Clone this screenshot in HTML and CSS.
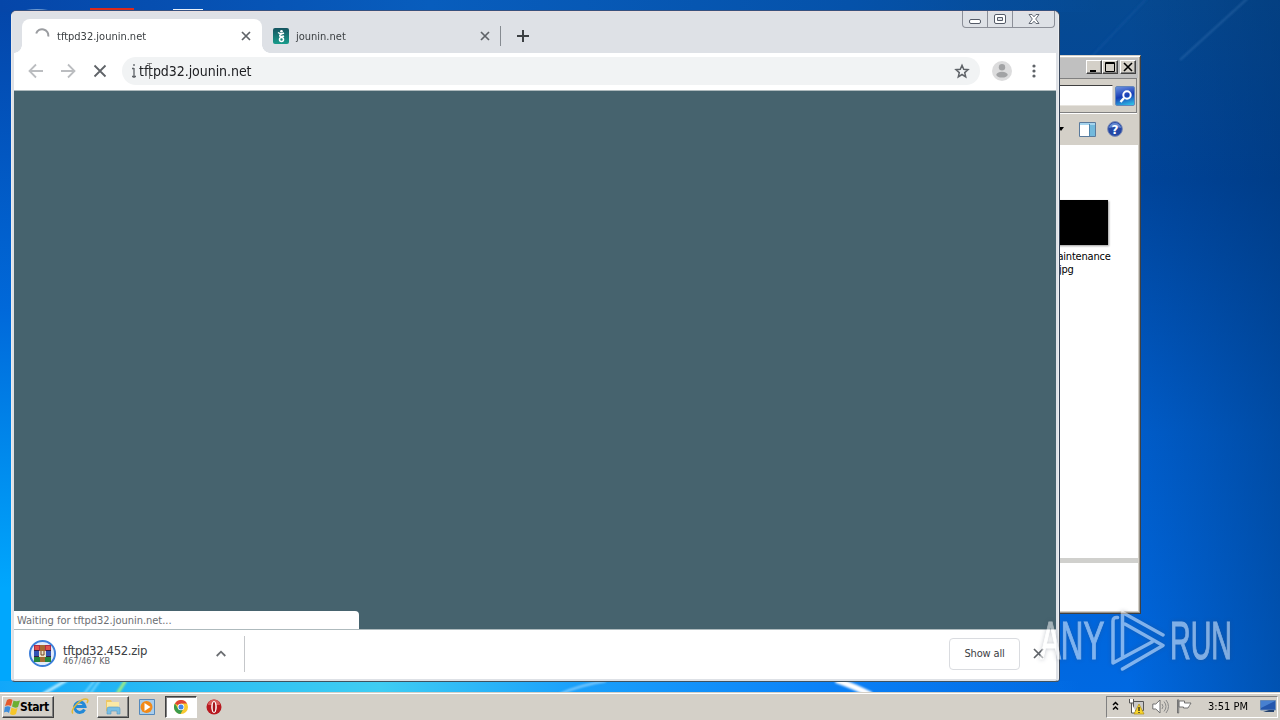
FILE: index.html
```
<!DOCTYPE html>
<html lang="en">
<head>
    <meta charset="UTF-8">
    <meta name="viewport" content="width=device-width, initial-scale=1.0">
    <title>tftpd32.jounin.net</title>
    <link rel="stylesheet" href="styles.css">
</head>
<body>
    <div class="desktop">
        <!-- wallpaper light streaks and desktop icons peeking out -->
        <svg class="wallpaper" width="1280" height="692" viewBox="0 0 1280 692">
            <defs><filter id="soft"><feGaussianBlur stdDeviation="1"/></filter></defs>
            <path d="M26 10q11-2 22 0v3H26z" fill="#6f9bd0"/>
            <path d="M90 8h44v4H90z" fill="#dc2a1c"/>
            <path d="M173 9h30v4h-30z" fill="#e9f1fa"/>
            <g fill="none" filter="url(#soft)">
                <path d="M1248-2 1180 60" stroke="#5d94cc" stroke-width="1.5" opacity=".4"/>
                <path d="M1150-5 1060 90" stroke="#2a72bd" stroke-width="3" opacity=".15"/>
                <path d="M43 694 67 680" stroke="#b9ecff" stroke-width="3"/>
                <path d="M84 694 95 680M90 694l10-14" stroke="#8be0ff" stroke-width="1.5"/>
                <path d="M117 694 126 680" stroke="#a6f07c" stroke-width="3"/>
                <path d="M560 694q20-9 46-13" stroke="#8bd0ff" stroke-width="2"/>
                <path d="M836 680q20 7 35 15" stroke="#fff" stroke-width="6"/>
            </g>
        </svg>

        <div class="explorer">
            <div class="ex-title">
                <span class="ex-btn"><svg width="14" height="12"><path d="M3 9h6v2H3z"/></svg></span>
                <span class="ex-btn"><svg width="14" height="12"><path d="M2.5 1.5h9v9h-9zM2 2.5h10" fill="none" stroke="#000"/></svg></span>
                <span class="ex-btn ex-close"><svg width="14" height="12"><path d="m3 2 8 8m0-8-8 8" stroke="#000" stroke-width="1.6"/></svg></span>
            </div>
            <div class="ex-search">
                <div class="ex-field"></div>
                <span class="ex-go"><svg width="19" height="19" viewBox="0 0 19 19"><circle cx="11" cy="8" r="3.7" fill="none" stroke="#fff" stroke-width="2"/><path d="m8 11-3.500 4" stroke="#fff" stroke-width="2.400"/></svg></span>
            </div>
            <div class="ex-tools">
                <svg width="6" height="4"><path d="M0 0h6L3 4z"/></svg>
                <svg class="pane-icon" width="17" height="15" viewBox="0 0 17 15"><path d="M.5.500h16v14H.500z" fill="#fff" stroke="#5a7a9c"/><path d="M1 1h15v2H1z" fill="#a5d4ee"/><path d="M11 3h5v11h-5z" fill="#72b9dc"/><path d="M10.500 2v12" stroke="#4f86ad"/></svg>
                <svg width="16" height="16" viewBox="0 0 16 16"><circle cx="8" cy="8" r="7.400" fill="#2447a6" stroke="#7e8db4"/><path d="M2 7a6 5 0 0 1 12 0q-6-2-12 0z" fill="#668ad2"/><text class="help-mark" x="8" y="12.500" text-anchor="middle">?</text></svg>
            </div>
            <div class="ex-files">
                <div class="thumb"></div>
                <div class="file-name">maintenance<br><span class="ext">.jpg</span></div>
            </div>
            <div class="ex-details"></div>
        </div>

        <div class="browser">
            <div class="win-buttons">
                <span class="min"><svg width="12" height="5"><rect x=".5" y=".5" width="11" height="4" rx="1.500" fill="#fff" stroke="#555b68"/></svg></span>
                <span class="max"><svg width="12" height="10"><rect x=".5" y=".5" width="11" height="9" rx="1.500" fill="#fff" stroke="#555b68"/><path d="M3.500 3.500h5v3h-5z" fill="#dee1e6" stroke="#555b68"/></svg></span>
                <span class="cls"><svg width="12" height="10" viewBox="0 0 12 10"><path d="M1 .500h3l2 2.300L8 .500h3L7.700 5 11 9.500H8L6 7.200 4 9.500H1L4.300 5z" fill="#fff" stroke="#555b68" stroke-width=".9"/></svg></span>
            </div>
            <div class="tabs">
                <div class="tab active">
                    <svg class="spinner" width="16" height="16" viewBox="0 0 16 16"><path d="M2.200 5.500A6.200 6.200 0 0 1 14.200 8.500" fill="none" stroke="#9a9ca0" stroke-width="2"/></svg>
                    <span class="tab-title">tftpd32.jounin.net</span>
                    <svg class="x" width="10" height="10"><path d="m1 1 8 8m0-8-8 8" stroke="#5f6368" stroke-width="1.700"/></svg>
                </div>
                <div class="tab second">
                    <svg width="16" height="16" viewBox="0 0 16 16"><defs><linearGradient id="fav" x2="0" y2="1"><stop stop-color="#155460"/><stop offset="1" stop-color="#199c8b"/></linearGradient></defs><rect width="16" height="16" rx="2" fill="url(#fav)"/><circle cx="8.500" cy="3.200" r="1.300" fill="#fff"/><path d="M5 4.500Q8 6.500 11 5M8.500 6Q6 7 7 8.300q2 .6 4-.3" fill="none" stroke="#fff" stroke-width="1.500"/><circle cx="8.500" cy="11.500" r="2" fill="none" stroke="#fff" stroke-width="1.500"/></svg>
                    <span class="tab-title">jounin.net</span>
                    <svg class="x" width="10" height="10"><path d="m1 1 8 8m0-8-8 8" stroke="#5f6368" stroke-width="1.700"/></svg>
                </div>
                <svg class="plus" width="12" height="12"><path d="M6 0v12M0 6h12" stroke="#3c4043" stroke-width="2"/></svg>
            </div>
            <div class="toolbar">
                <svg class="nav" width="16" height="16" viewBox="0 0 16 16"><path d="M15 8H2M8 1.500 1.500 8 8 14.500" fill="none" stroke="#bbbdc0" stroke-width="1.800"/></svg>
                <svg class="nav" width="16" height="16" viewBox="0 0 16 16"><path d="M1 8h13M8 1.500 14.500 8 8 14.500" fill="none" stroke="#bbbdc0" stroke-width="1.800"/></svg>
                <svg class="nav" width="16" height="16" viewBox="0 0 16 16"><path d="m2.500 2.500 11 11m0-11-11 11" stroke="#5f6368" stroke-width="1.800"/></svg>
                <div class="omnibox">
                    <svg width="4" height="16"><path d="M2 1v2M2 5v8M2 14v1M0 13.500h4M0 5.500h2" stroke="#5f6368" stroke-width="1.300"/></svg>
                    <span class="url">tftpd32.jounin.net</span>
                    <svg class="ibeam" width="5" height="16"><path d="M0 .500h5M2.500 0v16" stroke="#555" stroke-width=".7"/></svg>
                    <svg class="star" width="16" height="16" viewBox="0 0 16 16"><path d="m8 2.300 1.700 4 4.300.4-3.300 2.900 1 4.200L8 11.500l-3.700 2.300 1-4.200L2 6.700l4.300-.4z" fill="none" stroke="#5f6368" stroke-width="1.500"/></svg>
                </div>
                <svg class="avatar" width="20" height="20" viewBox="0 0 20 20"><circle cx="10" cy="10" r="10" fill="#dcdcdd"/><circle cx="10" cy="6.300" r="3.200" fill="#a2a3a5"/><ellipse cx="10" cy="13.700" rx="5.700" ry="2.900" fill="#a2a3a5"/></svg>
                <svg width="4" height="14" fill="#5f6368"><circle cx="2" cy="2" r="1.600"/><circle cx="2" cy="7" r="1.600"/><circle cx="2" cy="12" r="1.600"/></svg>
            </div>
            <div class="page">
                <div class="status">Waiting for tftpd32.jounin.net...</div>
            </div>
            <div class="shelf">
                <div class="download">
                    <svg width="27" height="27" viewBox="0 0 27 27"><circle cx="13.500" cy="13.500" r="12.500" fill="#e3ecfa" stroke="#3d7fda" stroke-width="2"/><path d="M5 5h17v6H5z" fill="#b12b47"/><path d="M5 11h17v5H5z" fill="#3153b4"/><path d="M5 16h17v6H5z" fill="#26853c"/><path d="M6 6h4v4H6zM17 6h4v4h-4z" fill="#e0524a"/><path d="M11 5h5v17h-5z" fill="#a66b31"/><path d="M10 11h7v6h-7z" fill="#eee5c9"/><path d="M12 11v4h3v-4" fill="none" stroke="#774524"/><path d="M5 10.500h5m7 0h5M5 16.500h5m7 0h5" stroke="#342245"/></svg>
                    <div class="dl-text">
                        <div class="dl-name">tftpd32.452.zip</div>
                        <div class="dl-size">467/467 KB</div>
                    </div>
                    <svg class="chevron" width="10" height="7"><path d="m.7 6 4.300-4.300L9.300 6" fill="none" stroke="#6b6e72" stroke-width="1.800"/></svg>
                </div>
                <div class="show-all">Show all</div>
                <svg class="shelf-x" width="11" height="11"><path d="m1 1 9 9m0-9-9 9" stroke="#5f6368" stroke-width="1.700"/></svg>
            </div>
        </div>

        <div class="watermark">
            <span class="any">ANY</span>
            <svg width="56" height="64" viewBox="0 0 56 64"><path d="M7.500 8.500Q3 8 3 12v42l39-21M12.500 49V3.500L53 26M15 15l38 21.500L12.500 60" fill="none" stroke="#fff" stroke-width="3.500" stroke-linejoin="round" stroke-linecap="round"/></svg>
            <span class="run">RUN</span>
        </div>

        <div class="taskbar">
            <div class="start">
                <svg width="16" height="16" viewBox="0 0 16 16"><path d="M3 1q3-2 5.500 0L7 7Q4.500 5.500 1 7z" fill="#e4592b"/><path d="M9.500 1.500Q12 3 16 1.500L14 8q-3 1.500-6-.500z" fill="#6caf32"/><path d="M.8 8Q4 6.500 6.500 8L5 14q-2.500-2-5-.500z" fill="#3d8ddb"/><path d="M7.500 8.500q3 2 6 .500L12 15q-3 2-6 0z" fill="#f6c628"/></svg>
                <b>Start</b>
            </div>
            <div class="task ie">
                <svg width="18" height="17" viewBox="0 0 18 17"><path d="M13.500 11.500A5.200 5.200 0 1 1 14 8.500H5" fill="none" stroke="#2389d7" stroke-width="3"/><path d="M2 15.500C-2 12 11-1 16.500 1.500q1 1-.500 3.500" fill="none" stroke="#e3b934" stroke-width="1.500"/></svg>
            </div>
            <div class="task open">
                <svg width="18" height="17" viewBox="0 0 18 17"><path d="M2 2h5l1 2h7v9H2z" fill="#eec764"/><path d="M3 4h12v8H3z" fill="#fae9a5"/><path d="M3 16V11q0-2 2-2h9q2 0 2 2v5h-3v-3H7v3z" fill="#79bfe4" stroke="#5698c2" stroke-width=".6"/></svg>
            </div>
            <div class="task media">
                <svg width="16" height="16" viewBox="0 0 16 16"><path d="M.5.500h15v15H.500z" fill="#a8cdec" stroke="#5489bc"/><circle cx="7.500" cy="8" r="6" fill="#f28a19"/><path d="m5.500 4 6 4-6 4z" fill="#fff"/></svg>
            </div>
            <div class="task pressed">
                <svg width="14" height="14" viewBox="0 0 14 14"><circle cx="7" cy="7" r="7" fill="#f9c92f"/><path d="M7 7 .900 3.500A7 7 0 0 1 13.100 3.500H7z" fill="#df4535"/><path d="M.9 3.500A7 7 0 0 0 6.500 14L9.500 8.500 4 8.500z" fill="#3b9b4b"/><circle cx="7" cy="7" r="3.300" fill="#fff"/><circle cx="7" cy="7" r="2.500" fill="#4286e8"/></svg>
            </div>
            <div class="task opera">
                <svg width="16" height="16" viewBox="0 0 16 16"><circle cx="8" cy="8" r="7.500" fill="#b81920"/><path d="M2 6a6 5.500 0 0 1 12 0" fill="#d95b5a"/><ellipse cx="8" cy="8" rx="2.800" ry="6" fill="#fff"/><ellipse cx="8" cy="8" rx="1.300" ry="5" fill="#a5141b"/></svg>
            </div>
            <div class="tray">
                <svg class="up" width="7" height="10"><path d="m1 4 2.500-2.500L6 4M1 8.500 3.500 6 6 8.500" fill="none" stroke="#000" stroke-width="1.500"/></svg>
                <svg width="17" height="17" viewBox="0 0 17 17"><path d="M5.500 3.500h10v9h-10z" fill="#c9c9c9" stroke="#555"/><path d="M1.500 1v4h4V1M3.500 5v10h5" fill="#fff" stroke="#555"/><path d="m11 6 5 10H6z" fill="#f8d52b" stroke="#ad8c19" stroke-width=".7"/><path d="M11 9v4m0 1v1" stroke="#222" stroke-width="1.300"/></svg>
                <svg class="sound" width="17" height="15" viewBox="0 0 17 15"><path d="M.8 5h3L8 1v13l-4.200-4h-3z" fill="#fff" stroke="#707070"/><path d="M10 5q2 2.500 0 5m2-7.500q4 5 0 10M14 1q5 6.500 0 13" fill="none" stroke="#888"/></svg>
                <svg class="flag" width="17" height="15" viewBox="0 0 17 15"><path d="M1.500 14V.800h1.200V14zM3 2h5.500v2H15l-1.500 2.500L12 9H7.500V8H3z" fill="#fff" stroke="#666" stroke-width=".9"/></svg>
                <span class="clock">3:51 PM</span>
                <svg width="16" height="13" viewBox="0 0 16 13"><path d="M.5.500h15v9.500H.500z" fill="#2457ad" stroke="#6689b6"/><path d="M1 1h14L1 8z" fill="#4780d0"/><path d="M3 12h11v-2H9z" fill="#24426f"/></svg>
            </div>
        </div>
    </div>
</body>
</html>
```
FILE: styles.css
```
* { box-sizing: border-box; }
body {
    margin: 0;
    font-family: "DejaVu Sans Condensed", "DejaVu Sans", Tahoma, sans-serif;
    font-stretch: condensed;
    font-size: 11px;
    color: #000;
    overflow: hidden;
}
svg { display: block; flex: none; }

.desktop {
    position: relative;
    width: 1280px;
    height: 720px;
    overflow: hidden;
    white-space: nowrap;
    background:
        linear-gradient(90deg, #12a7fa 0, #2bbdf3 180px, #3fcdf3 380px, #1ba1fb 570px, #0b82f8 820px, rgba(0,104,226,0) 1080px) 0 681px / 1280px 11px no-repeat,
        linear-gradient(90deg, #0546a9, #085dbd 430px, #0552aa 850px, rgba(4,72,148,0) 1100px) 0 0 / 1280px 12px no-repeat,
        linear-gradient(180deg, #0445a8, #0069da 45%, #00a7fd 85%) 0 0 / 11px 692px no-repeat,
        linear-gradient(90deg, rgba(0,45,90,0) 1130px, rgba(0,48,105,.4) 1280px),
        linear-gradient(180deg, #064a92, #00459c 25%, #005dcb 60%, #0069e2 96%);
}
.wallpaper { position: absolute; left: 0; top: 0; }

/* file explorer behind the browser */
.explorer {
    position: absolute;
    left: 900px;
    top: 55px;
    width: 241px;
    height: 559px;
    padding: 2px;
    display: flex;
    flex-direction: column;
    background: #d4d0c8;
    border: 1px solid #404040;
    border-color: #d4d0c8 #404040 #404040 #d4d0c8;
    box-shadow: inset 1px 1px #fff, inset -1px -1px #9a958c;
}
.ex-title {
    height: 20px;
    padding: 2px 2px 4px;
    display: flex;
    justify-content: flex-end;
    background: #c0c0c0;
}
.ex-btn {
    width: 16px;
    height: 14px;
    border: 1px solid;
    border-color: #fff #404040 #404040 #fff;
    background: #d4d0c8;
    box-shadow: inset -1px -1px #808080;
}
.ex-close { margin-left: 2px; }
.ex-search {
    height: 35px;
    margin-right: 1px;
    display: flex;
    align-items: center;
    gap: 2px;
    padding: 0 1px;
    border: 1px solid #808080;
    box-shadow: 0 1px #fff;
}
.ex-field {
    flex: 1;
    height: 21px;
    background: #fff;
    border: 1px solid;
    border-color: #404040 #e7e4de #e7e4de #404040;
}
.ex-go {
    width: 20px;
    height: 20px;
    border-radius: 2px;
    background: linear-gradient(165deg, #6b91df, #173cb5 50%, #31caea);
    border: 1px solid #6386bb;
}
.ex-tools {
    height: 32px;
    display: flex;
    align-items: center;
    justify-content: flex-end;
    padding-right: 15px;
}
.pane-icon { margin: 0 11px 0 15px; }
.help-mark { font: bold 12px "DejaVu Sans", sans-serif; fill: #fff; }
.ex-files {
    height: 413px;
    padding: 55px 30px 0 0;
    background: #fff;
    display: flex;
    flex-direction: column;
    align-items: flex-end;
}
.thumb { width: 60px; height: 45px; background: #000; box-shadow: 1px 1px 2px #999; }
.file-name {
    width: 63px;
    margin: 5px -3px 0 0;
    line-height: 13px;
    letter-spacing: -0.2px;
}
.ext { margin-left: 8px; }
.ex-details { flex: 1; border-top: 5px solid #d0d0cd; background: #fff; }

/* chrome window */
.browser {
    position: absolute;
    left: 11px;
    top: 11px;
    width: 1048px;
    height: 671px;
    padding: 0 2px 2px;
    display: flex;
    flex-direction: column;
    background: #dee1e6;
    border: 1px solid #e9e9eb;
    border-right-color: #eceef1;
    border-bottom-color: #40525f;
    border-top-color: #eadfe0;
    border-radius: 5px 5px 4px 4px;
    box-shadow: 1px 0 #38465a, 0 -1px #35517f;
}
.win-buttons {
    position: absolute;
    right: 3px;
    top: -1px;
    height: 17px;
    display: flex;
    border: 1px solid #8c8f98;
    border-top: 0;
    border-radius: 0 0 4px 4px;
}
.win-buttons span { display: flex; align-items: center; justify-content: center; border-left: 1px solid #8c8f98; }
.win-buttons .min { width: 24px; border-left: 0; padding-top: 4px; }
.win-buttons .max { width: 25px; }
.win-buttons .cls { width: 42px; }
.tabs { height: 41px; padding: 7px 0 0 8px; display: flex; align-items: center; color: #3c4043; }
.tab {
    width: 240px;
    height: 34px;
    display: flex;
    align-items: center;
    padding: 0 11px 0 12px;
}
.tab-title { flex: 1; margin-left: 7px; letter-spacing: 0; }
.active { position: relative; background: #fff; border-radius: 8px 8px 0 0; }
.active::before,
.active::after {
    content: "";
    position: absolute;
    bottom: 0;
    left: -8px;
    width: 8px;
    height: 8px;
    background: radial-gradient(circle at 0 0, transparent 7.5px, #fff 8px);
}
.active::after { left: auto; right: -8px; background: radial-gradient(circle at 100% 0, transparent 7.5px, #fff 8px); }
.second { width: 239px; height: 20px; padding-left: 11px; border-right: 1px solid #868b91; padding-right: 10px; }
.plus { margin-left: 16px; }
.toolbar {
    height: 38px;
    padding: 0 20px 2px 14px;
    display: flex;
    align-items: center;
    background: #fff;
    border-bottom: 1px solid #aebabd;
}
.nav { margin-right: 16px; }
.omnibox {
    position: relative;
    width: 858px;
    height: 28px;
    margin-left: -2px;
    padding: 0 10px;
    display: flex;
    align-items: center;
    border-radius: 14px;
    background: #f1f3f4;
}
.url { flex: 1; margin-left: 3px; font-size: 14px; letter-spacing: -0.05px; color: #202124; }
.ibeam { position: absolute; left: 25px; top: 6px; }
.avatar { margin: 0 20px 0 12px; }
.page { flex: 1; display: flex; align-items: flex-end; background: #46636e; }
.status {
    width: 345px;
    height: 18px;
    padding: 1px 0 0 3px;
    line-height: 18px;
    letter-spacing: -0.03px;
    background: #fff;
    color: #6b6e72;
    border-radius: 0 4px 0 0;
}
.shelf {
    height: 50px;
    padding: 0 13px 2px 15px;
    display: flex;
    align-items: center;
    background: #fff;
    border-top: 1px solid #aebabd;
}
.download {
    width: 216px;
    height: 36px;
    display: flex;
    align-items: center;
    border-right: 1px solid #c5c7ca;
}
.dl-text { flex: 1; margin: 3px 0 0 7px; }
.dl-name { font-size: 13px; line-height: 13px; letter-spacing: -0.36px; color: #3c4043; }
.dl-size { font-size: 9px; line-height: 9px; color: #5f6368; }
.chevron { margin-right: 18px; }
.show-all {
    width: 71px;
    height: 32px;
    margin-left: auto;
    border: 1px solid #dadce0;
    border-radius: 4px;
    line-height: 30px;
    text-align: center;
    letter-spacing: -0.15px;
    color: #3c4043;
}
.shelf-x { margin: 0 -1px 0 13px; }

.watermark {
    position: absolute;
    left: 1040px;
    top: 609px;
    height: 64px;
    display: flex;
    align-items: center;
    opacity: .5;
    color: #fff;
    filter: drop-shadow(0 0 2px rgba(60,70,90,.6));
}
.watermark span {
    width: 65px;
    font: 53px/64px "Liberation Sans", sans-serif;
    transform-origin: 0 50%;
    -webkit-text-stroke: 1.2px #fff;
}
.any { transform: scaleX(.59); }
.run { margin: 0 0 0 4px; transform: scaleX(.54); }
.watermark svg { margin-left: 5px; }

.taskbar {
    position: absolute;
    left: 0;
    bottom: 0;
    width: 1280px;
    height: 28px;
    padding: 1px 2px 1px;
    display: flex;
    align-items: center;
    background: #d4d0c8;
    border-top: 1px solid #d4d0c8;
    box-shadow: inset 0 1px #fff;
}
.start {
    width: 52px;
    height: 22px;
    margin-right: 11px;
    padding-left: 1px;
    display: flex;
    align-items: center;
    border: 1px solid;
    border-color: #fff #404040 #404040 #fff;
    box-shadow: inset -1px -1px #808080;
    font-size: 12px;
    letter-spacing: -0.4px;
}
.task { width: 34px; height: 22px; display: flex; align-items: center; justify-content: center; }
.ie { width: 32px; padding-right: 2px; }
.open { width: 32px; border: 1px solid; border-color: #fff #404040 #404040 #fff; box-shadow: inset -1px -1px #808080; }
.media { width: 36px; }
.pressed { width: 32px; background: #fff; border: 1px solid; border-color: #404040 #fff #fff #404040; box-shadow: inset 1px 1px #808080; }
.opera { width: 34px; }
.tray {
    width: 172px;
    height: 22px;
    margin-left: auto;
    padding: 0 1px 0 5px;
    display: flex;
    align-items: center;
    border: 1px solid;
    border-color: #808080 #fff #fff #808080;
}
.up { margin: 0 9px 2px 0; }
.sound { margin-left: 7px; }
.flag { margin-left: 7px; }
.clock { flex: 1; padding-left: 3px; text-align: center; }
```
